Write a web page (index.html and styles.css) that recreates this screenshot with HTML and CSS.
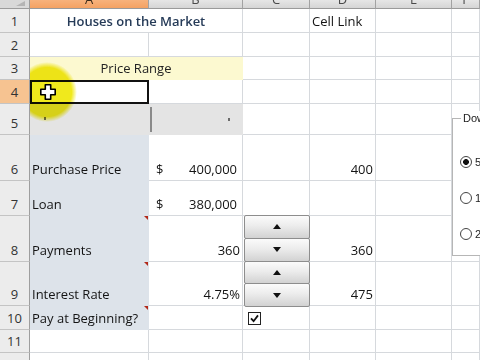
FILE: index.html
```html
<!DOCTYPE html>
<html lang="en">
<head>
  <meta charset="UTF-8">
  <title>Houses on the Market</title>
  <link rel="stylesheet" href="styles.css">
</head>
<body>
  <div class="sheet">
    <!-- column headers, cut off at the top -->
    <div class="row hdr">
      <div class="corner"><span class="tri"></span></div>
      <div class="ch ca on"><span>A</span></div>
      <div class="ch cb"><span>B</span></div>
      <div class="ch cc"><span>C</span></div>
      <div class="ch cd"><span>D</span></div>
      <div class="ch ce"><span>E</span></div>
      <div class="ch cf"><span>F</span></div>
    </div>
    <div class="row r1">
      <div class="rh">1</div>
      <div class="c cab center title">Houses on the Market</div>
      <div class="c cc"></div>
      <div class="c cd">Cell Link</div>
      <div class="c ce"></div>
      <div class="c cf"></div>
    </div>
    <div class="row r2">
      <div class="rh">2</div>
      <div class="c ca"></div>
      <div class="c cb"></div>
      <div class="c cc"></div>
      <div class="c cd"></div>
      <div class="c ce"></div>
      <div class="c cf"></div>
    </div>
    <div class="row r3">
      <div class="rh">3</div>
      <div class="c cab center yellow">Price Range</div>
      <div class="c cc"></div>
      <div class="c cd"></div>
      <div class="c ce"></div>
      <div class="c cf"></div>
    </div>
    <div class="row r4">
      <div class="rh on">4</div>
      <div class="c ca selected"></div>
      <div class="c cb"></div>
      <div class="c cc"></div>
      <div class="c cd"></div>
      <div class="c ce"></div>
      <div class="c cf"></div>
    </div>
    <div class="row r5">
      <div class="rh">5</div>
      <div class="c ca gray"><i class="tick left-tick"></i></div>
      <div class="c cb gray slider"><i class="bar"></i><i class="tick right-tick"></i></div>
      <div class="c cc"></div>
      <div class="c cd"></div>
      <div class="c ce"></div>
      <div class="c cf"></div>
    </div>
    <div class="row r6">
      <div class="rh">6</div>
      <div class="c ca blue">Purchase Price</div>
      <div class="c cb acct"><span>$</span><span>400,000</span></div>
      <div class="c cc"></div>
      <div class="c cd num">400</div>
      <div class="c ce"></div>
      <div class="c cf"></div>
    </div>
    <div class="row r7">
      <div class="rh">7</div>
      <div class="c ca blue">Loan</div>
      <div class="c cb acct"><span>$</span><span>380,000</span></div>
      <div class="c cc"></div>
      <div class="c cd"></div>
      <div class="c ce"></div>
      <div class="c cf"></div>
    </div>
    <div class="row r8">
      <div class="rh">8</div>
      <div class="c ca blue note">Payments</div>
      <div class="c cb num">360</div>
      <div class="c cc holder">
        <div class="spin">
          <div class="btn"><i class="up"></i></div>
          <div class="btn"><i class="down"></i></div>
          <div class="btn"><i class="up"></i></div>
          <div class="btn"><i class="down"></i></div>
        </div>
      </div>
      <div class="c cd num">360</div>
      <div class="c ce"></div>
      <div class="c cf"></div>
    </div>
    <div class="row r9">
      <div class="rh">9</div>
      <div class="c ca blue note">Interest Rate</div>
      <div class="c cb num">4.75%</div>
      <div class="c cc"></div>
      <div class="c cd num">475</div>
      <div class="c ce"></div>
      <div class="c cf"></div>
    </div>
    <div class="row r10">
      <div class="rh">10</div>
      <div class="c ca blue note">Pay at Beginning?</div>
      <div class="c cb"></div>
      <div class="c cc check">
        <svg width="13" height="13" viewBox="0 0 13 13">
          <rect x="0.5" y="0.5" width="12" height="12" fill="#fff" stroke="#222"/>
          <path d="M3 6.3 L5.6 9.2 L10 3.4" fill="none" stroke="#111" stroke-width="1.8"/>
        </svg>
      </div>
      <div class="c cd"></div>
      <div class="c ce"></div>
      <div class="c cf"></div>
    </div>
    <div class="row r11">
      <div class="rh">11</div>
      <div class="c ca"></div>
      <div class="c cb"></div>
      <div class="c cc"></div>
      <div class="c cd"></div>
      <div class="c ce"></div>
      <div class="c cf"></div>
    </div>
    <div class="row r12">
      <div class="rh">12</div>
      <div class="c ca"></div>
      <div class="c cb"></div>
      <div class="c cc"></div>
      <div class="c cd"></div>
      <div class="c ce"></div>
      <div class="c cf"></div>
    </div>

    <!-- floating option group -->
    <div class="group">
      <span class="legend">Down Payment</span>
      <div class="opt"><span class="radio on"></span>5%</div>
      <div class="opt"><span class="radio"></span>10%</div>
      <div class="opt"><span class="radio"></span>20%</div>
    </div>

    <!-- pointer highlight -->
    <div class="spot"></div>
    <svg class="cursor" width="16" height="16" viewBox="0 0 16 16">
      <path d="M5.3 0.8h5.4v4.5h4.5v5.4h-4.5v4.5h-5.4v-4.5h-4.5v-5.4h4.5z" fill="#fff" stroke="#000" stroke-width="1.6" stroke-linejoin="round"/>
    </svg>
  </div>
</body>
</html>
```

FILE: styles.css
```css
* { margin: 0; padding: 0; box-sizing: border-box; }
body {
  font-family: "Open Sans", "Liberation Sans", sans-serif;
  font-size: 13px;
  color: #141414;
  background: #fff;
  overflow: hidden;
}
.sheet {
  position: relative;
  width: 480px;
  height: 360px;
  overflow: hidden;
}
.row { display: flex; }
.hdr { height: 9px; }
.r1, .r2, .r4, .r10 { height: 24px; }
.r3, .r11, .r12 { height: 23px; }
.r5 { height: 31px; }
.r6, .r8 { height: 46px; }
.r7 { height: 35px; }
.r9 { height: 44px; }

/* column widths */
.ca { width: 119px; }
.cb { width: 94px; }
.cc { width: 67px; }
.cd { width: 66px; }
.ce { width: 76px; }
.cf { flex: 1; }
.cab { width: 213px; }

/* headers */
.corner {
  width: 30px;
  flex: none;
  background: #d9d9d9;
  border-right: 1px solid #9c9c9c;
  border-bottom: 1px solid #9c9c9c;
  display: flex;
  justify-content: flex-end;
  align-items: flex-end;
  padding: 0 4px 2px 0;
}
.tri {
  border-left: 9px solid transparent;
  border-bottom: 5px solid #b4b4b4;
}
.ch {
  flex: none;
  background: linear-gradient(#e6e6e6, #d5d5d5);
  border-right: 1px solid #a2a2a2;
  border-bottom: 1px solid #9a9a9a;
  display: flex;
  justify-content: center;
  align-items: flex-end;
  color: #4a4a4a;
}
.ch.cf { flex: 1; }
.ch span { line-height: 14px; margin-bottom: 2px; }
.ch.on { background: linear-gradient(#f7b27c, #f4a263); color: #3a2a1a; }
.rh {
  width: 30px;
  flex: none;
  position: relative;
  z-index: 3;
  background: #ececec;
  border-right: 1px solid #9e9e9e;
  border-bottom: 1px solid #c4c4c4;
  display: flex;
  justify-content: center;
  align-items: flex-end;
  padding-bottom: 2px;
  line-height: 18px;
  color: #333;
}
.rh.on { background: #f6c391; }

/* cells */
.c {
  flex: none;
  position: relative;
  border-right: 1px solid #d6d9dd;
  border-bottom: 1px solid #d6d9dd;
  display: flex;
  align-items: flex-end;
  padding: 0 2px 2px;
  line-height: 18px;
  white-space: nowrap;
}
.c.cf { flex: 1; }
.center { justify-content: center; }
.num { justify-content: flex-end; }
.acct { justify-content: space-between; padding: 0 5px 2px 7px; }
.title { color: #263b58; font-weight: 600; }
.yellow { background: #fcf9d0; border-color: transparent; color: #222; }
.blue { background: #dde3ea; border-color: transparent; }
.gray { background: #e4e4e4; border-color: transparent; align-items: center; }
.selected { border: 2px solid #111; }
.note::after {
  content: "";
  position: absolute;
  top: 0;
  right: 0;
  border-top: 4px solid #b22a1a;
  border-left: 4px solid transparent;
}

/* row 5 slider bits */
.tick { display: block; width: 2px; height: 3px; background: #6b6b6b; }
.left-tick { margin-left: 12px; }
.slider { padding: 0; }
.bar {
  display: block;
  width: 2px;
  height: 25px;
  margin-left: 1px;
  background: #8a8a8a;
}
.right-tick { margin-left: auto; margin-right: 12px; }

/* spinners */
.holder { overflow: visible; }
.spin {
  position: absolute;
  top: -1px;
  left: 1px;
  width: 66px;
  height: 92px;
  z-index: 2;
  display: flex;
  flex-direction: column;
}
.btn {
  flex: 1;
  border: 1px solid #8d8d8d;
  border-radius: 2px;
  background: linear-gradient(#fbfbfb, #ececec 45%, #d2d2d2);
  display: flex;
  justify-content: center;
  align-items: center;
}
.btn + .btn { margin-top: -1px; }
.up {
  border-left: 4px solid transparent;
  border-right: 4px solid transparent;
  border-bottom: 5px solid #111;
}
.down {
  border-left: 4px solid transparent;
  border-right: 4px solid transparent;
  border-top: 5px solid #111;
}
.check { align-items: center; padding: 1px 0 0 5px; }
.check svg { display: block; }

/* option group */
.group {
  position: absolute;
  left: 452px;
  top: 118px;
  width: 120px;
  height: 138px;
  z-index: 2;
  background: #fff;
  border: 1px solid #b6b6b6;
  padding: 37px 0 0 7px;
  display: flex;
  flex-direction: column;
  gap: 24px;
  font-family: "Liberation Sans", sans-serif;
  font-size: 11px;
  color: #222;
}
.legend {
  position: absolute;
  top: -8px;
  left: 8px;
  padding: 0 2px;
  background: #fff;
  line-height: 14px;
}
.opt { display: flex; align-items: center; gap: 3px; line-height: 12px; }
.radio {
  width: 12px;
  height: 12px;
  border: 1px solid #444;
  border-radius: 50%;
  background: #fff;
}
.radio.on { background: radial-gradient(circle, #111 0 2.6px, #fff 3.2px); }

/* pointer highlight */
.spot {
  position: absolute;
  left: 17px;
  top: 62px;
  width: 60px;
  height: 60px;
  border-radius: 50%;
  z-index: 2;
  background: radial-gradient(closest-side, #f0e91c 82%, rgba(240, 233, 28, 0) 100%);
  mix-blend-mode: multiply;
}
.cursor {
  position: absolute;
  left: 40px;
  top: 84px;
  z-index: 4;
}
```
